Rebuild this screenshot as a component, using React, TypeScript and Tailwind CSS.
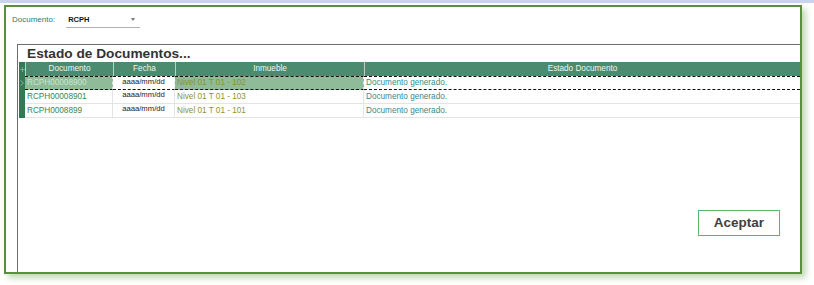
import React from "react";

const rows = [
  { doc: "RCPH00008900", fecha: "aaaa/mm/dd", inm: "Nivel 01 T 01 - 102", est: "Documento generado.", sel: true },
  { doc: "RCPH00008901", fecha: "aaaa/mm/dd", inm: "Nivel 01 T 01 - 103", est: "Documento generado.", sel: false },
  { doc: "RCPH0008899", fecha: "aaaa/mm/dd", inm: "Nivel 01 T 01 - 101", est: "Documento generado.", sel: false },
];

export default function App() {
  return (
    <div className="w-[814px] h-[285px] bg-white overflow-hidden font-['Liberation_Sans',Arial,sans-serif]">
      <div className="h-[3px] bg-[#c8d4ee]" />
      <div className="ml-[4px] mt-[2px] w-[798px] h-[269px] border-2 border-[#5a8f3e] bg-white shadow-[4px_4px_6px_rgba(120,170,100,0.45)] flex flex-col overflow-hidden">
        {/* Documento selector */}
        <div className="flex items-center h-[16px] mt-[5px] pl-[6px]">
          <span className="text-[8px] text-[#2e7d6e]">Documento:</span>
          <div className="ml-[11px] w-[74px] h-[16px] border-b border-[#b0b0b0] flex items-center justify-between pl-[2px] pr-[5px]">
            <span className="text-[7.5px] font-bold text-[#111]">RCPH</span>
            <svg width="4" height="3" viewBox="0 0 4 3"><path d="M0 0 L4 0 L2 3 Z" fill="#777" /></svg>
          </div>
        </div>

        {/* Panel */}
        <div className="ml-[11px] mt-[16px] flex-1 border-l border-t border-[#6e6e6e] flex flex-col">
          <div className="h-[17px] pl-[9px] flex items-center text-[13.7px] font-bold text-[#333] leading-none">
            Estado de Documentos...
          </div>
          <div className="ml-[1px] grid grid-cols-[6px_88px_62px_189px_1fr] text-[8.2px] leading-none">
            {/* header */}
            <div className="h-[14px] bg-[#2f7a57] flex items-center justify-center">
              <svg width="5" height="5" viewBox="0 0 5 5"><path d="M2.5 0 V5 M0 2.5 H5" stroke="#6fae8c" strokeWidth="1" /></svg>
            </div>
            {["Documento", "Fecha", "Inmueble", "Estado Documento"].map((h) => (
              <div key={h} className="h-[14px] bg-[#4b8b70] border-l border-[#b7d2c2] flex items-center justify-center text-[#eef5f0]">
                {h}
              </div>
            ))}
            {rows.map((r, i) => {
              const dash = r.sel ? "border-y border-dashed border-y-[#111]" : "border-b border-b-[#e4e4e4]";
              return (
                <React.Fragment key={i}>
                  <div className="h-[14px] bg-[#2f7a57] flex items-center justify-center">
                    {r.sel && (
                      <svg width="4" height="6" viewBox="0 0 4 6"><path d="M0.5 0.5 L3.5 3 L0.5 5.5" stroke="#7fb89a" strokeWidth="1" fill="none" /></svg>
                    )}
                  </div>
                  <div className={`h-[14px] pl-[2px] pt-[1px] flex items-center border-r border-r-[#e4e4e4] ${dash} ${r.sel ? "bg-[#8fbb98] text-[#c8e6cf]" : "text-[#2f8a56]"}`}>
                    {r.doc}
                  </div>
                  <div className={`h-[14px] flex items-start pt-[1px] justify-center border-r border-r-[#e4e4e4] text-[7.7px] text-[#222] bg-white ${dash}`}>
                    {r.fecha}
                  </div>
                  <div className={`h-[14px] pl-[2px] pt-[1px] flex items-center border-r border-r-[#e4e4e4] ${dash} ${r.sel ? "bg-[#8fbb98] text-[#8d9030]" : "text-[#8f922c]"}`}>
                    {r.inm}
                  </div>
                  <div className={`h-[14px] pl-[2px] pt-[1px] flex items-center text-[#3a8a86] bg-white ${dash}`}>
                    {r.est}
                  </div>
                </React.Fragment>
              );
            })}
          </div>
          <div className="self-end mr-[20px] mt-[92px] w-[82px] h-[26px] border border-[#55b86a] flex items-center justify-center text-[13.5px] font-bold text-[#404040]">
            Aceptar
          </div>
        </div>
      </div>
    </div>
  );
}
